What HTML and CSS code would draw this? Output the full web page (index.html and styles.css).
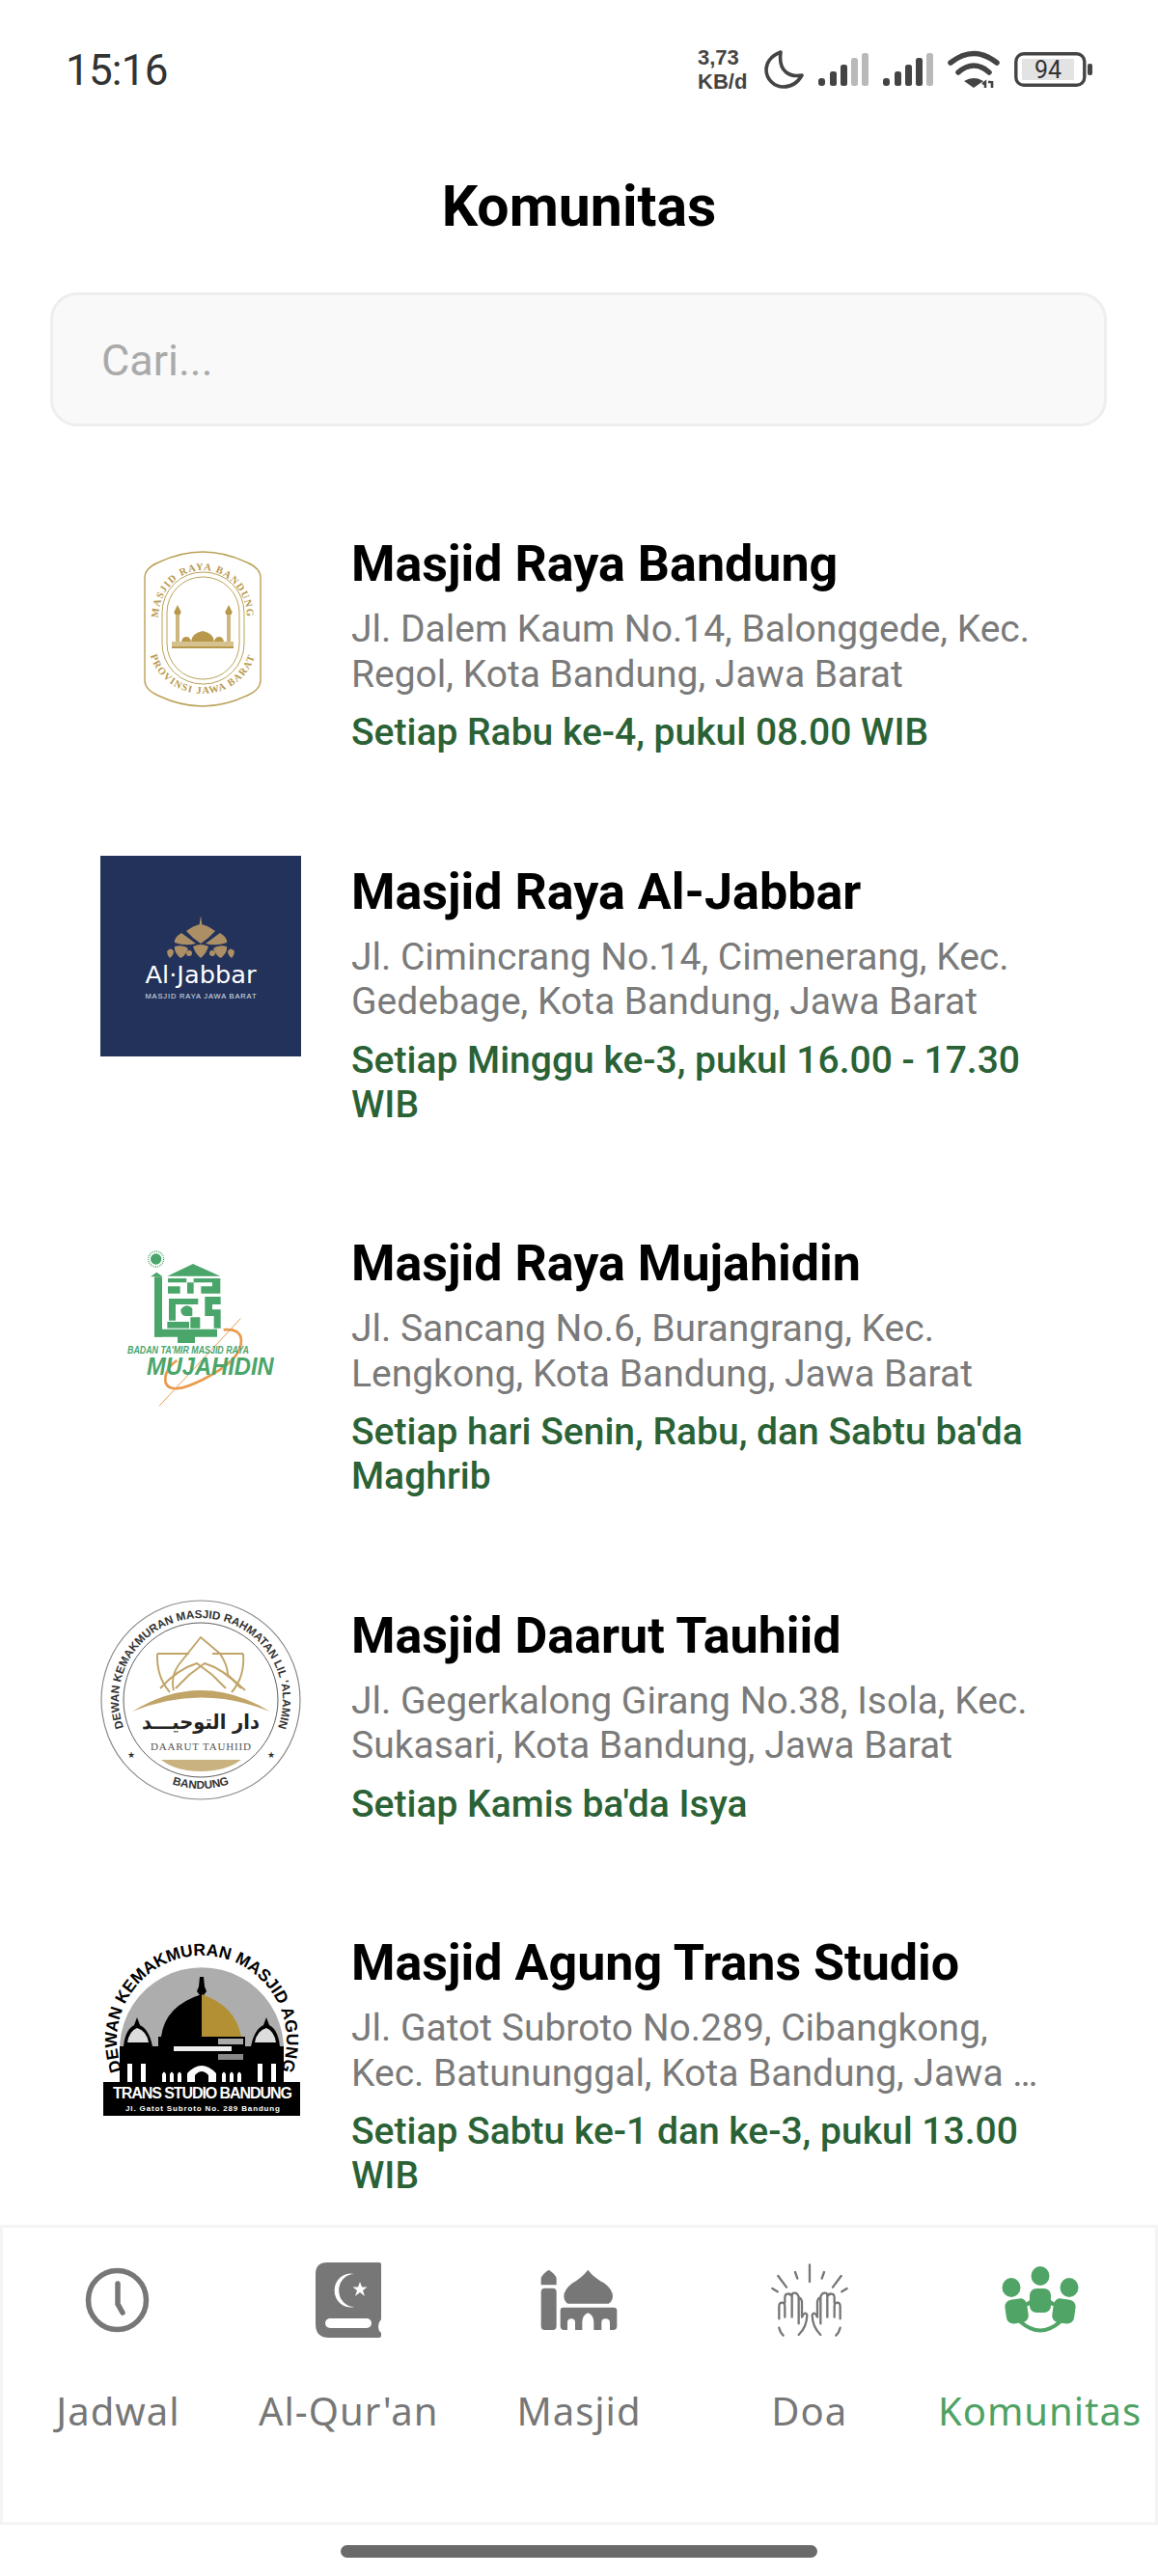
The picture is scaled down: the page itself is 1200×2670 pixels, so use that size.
FILE: index.html
```html
<!DOCTYPE html>
<html lang="id">
<head>
  <meta charset="UTF-8" />
  <meta name="viewport" content="width=device-width, initial-scale=1.0"/>
  <title>Komunitas</title>
  <link rel="stylesheet" href="styles.css">
</head>
<body>

  <div class="status-bar">
    <span class="time">15:16</span>
    <div class="status-icons">
      <div class="net-speed">3,73<br>KB/d</div>
      <svg width="41" height="40" viewBox="0 0 41 40"><path d="M17 2C6 6 2 14 2 20c0 10 8 18 18 18 8 0 15-5 19-12-11 2-25-2-22-24z" fill="none" stroke="#444" stroke-width="3.6" stroke-linejoin="round"/></svg>
      <svg width="52" height="34" viewBox="0 0 52 34">
        <rect x="0" y="26" width="7" height="8" rx="3" fill="#444"/><rect x="12" y="19" width="7" height="15" rx="2.5" fill="#444"/><rect x="23" y="12" width="7" height="22" rx="2.5" fill="#444"/><rect x="34" y="5" width="7" height="29" rx="2.5" fill="#b9b9b9"/><rect x="45" y="0" width="7" height="34" rx="2.5" fill="#b9b9b9"/>
      </svg>
      <svg width="52" height="34" viewBox="0 0 52 34">
        <rect x="0" y="26" width="7" height="8" rx="3" fill="#444"/><rect x="12" y="19" width="7" height="15" rx="2.5" fill="#444"/><rect x="23" y="12" width="7" height="22" rx="2.5" fill="#444"/><rect x="34" y="5" width="7" height="29" rx="2.5" fill="#444"/><rect x="45" y="0" width="7" height="34" rx="2.5" fill="#b9b9b9"/>
      </svg>
      <svg width="54" height="40" viewBox="0 0 54 40">
        <path d="M3 13Q27-6 51 13M11 23Q27 9 43 23" fill="none" stroke="#444" stroke-width="5.500" stroke-linecap="round"/>
        <path d="M17 32Q27 26 37 32L27 39z" fill="#444"/>
        <path d="M39 39v-6l-3 2M42 33l3 0M46 32v7" fill="none" stroke="#444" stroke-width="2.6"/>
      </svg>
      <svg width="81" height="36" viewBox="0 0 81 36">
        <rect x="1.8" y="1.8" width="71" height="32.4" rx="8" fill="none" stroke="#444" stroke-width="3.4"/>
        <rect x="8" y="7" width="54" height="22" fill="#e3e3e3"/>
        <rect x="76" y="12" width="5" height="12" rx="2" fill="#444"/>
        <text x="35" y="27" class="batt-text" text-anchor="middle">94</text>
      </svg>
    </div>
  </div>

  <h1 class="page-title">Komunitas</h1>

  <div class="search-box">Cari...</div>

  <main class="list">

    <div class="item">
      <svg class="logo" viewBox="0 0 208 208">
        <path d="M46 52Q46 42 60 36Q106 14 152 36Q166 42 166 52V158Q166 168 152 174Q106 196 60 174Q46 168 46 158z" fill="#fff" stroke="#bba157" stroke-width="1.4"/>
        <rect x="64" y="46" width="85" height="116" rx="42" fill="none" stroke="#bba157" stroke-width="1"/>
        <rect x="69" y="51" width="75" height="106" rx="37" fill="none" stroke="#bba157" stroke-width="1"/>
        <path id="l1top" d="M60 94A46 50 0 0 1 152 94" fill="none"/>
        <path id="l1bot" d="M50 119A56 53 0 0 0 162 119" fill="none"/>
        <text class="logo1-text"><textPath href="#l1top" startOffset="50%" text-anchor="middle">MASJID RAYA BANDUNG</textPath></text>
        <text class="logo1-text"><textPath href="#l1bot" startOffset="50%" text-anchor="middle">PROVINSI JAWA BARAT</textPath></text>
        <g fill="#b8994c">
          <path d="M76 88Q80 80 80 80Q80 80 84 88z"/><rect x="77" y="88" width="6" height="2"/><rect x="78" y="90" width="4" height="32" fill="#cdb77e"/>
          <path d="M129 88Q133 80 133 80Q133 80 137 88z"/><rect x="130" y="88" width="6" height="2"/><rect x="131" y="90" width="4" height="32" fill="#cdb77e"/>
          <path d="M94 118Q95 109 106 107Q117 109 118 118z"/>
          <path d="M84 118Q85 113 89 113Q93 113 94 118zM118 118Q119 113 123 113Q127 113 128 118z"/>
          <rect x="74" y="118" width="64" height="5" fill="#d5c28f"/>
          <rect x="74" y="123" width="64" height="2"/>
        </g>
      </svg>
      <div class="item-body">
        <h3>Masjid Raya Bandung</h3>
        <p class="address">Jl. Dalem Kaum No.14, Balonggede, Kec. Regol, Kota Bandung, Jawa Barat</p>
        <p class="schedule">Setiap Rabu ke-4, pukul 08.00 WIB</p>
      </div>
    </div>

    <div class="item">
      <svg class="logo" viewBox="0 0 208 208">
        <rect width="208" height="208" fill="#23325a"/>
        <g fill="#ad8f66">
          <path d="M104 62l1.500 10-1.500 3-1.500-3z"/>
          <path d="M89 78Q97 72 104 71Q111 72 119 78Q112 86 104 91Q96 86 89 78z"/>
          <path d="M84 80L99 91Q88 94 77 90Q76 85 84 80zM124 80L109 91Q120 94 131 90Q132 85 124 80z"/>
          <path d="M77 94Q86 92 91 96Q88 104 83 106Q76 100 77 94zM131 94Q122 92 117 96Q120 104 125 106Q132 100 131 94z"/>
          <path d="M96 94Q104 90 112 94Q110 101 104 106Q98 101 96 94z"/>
          <path d="M69 99Q73 94 76 99Q76 103 72 106Q69 103 69 99zM139 99Q135 94 132 99Q132 103 136 106Q139 103 139 99z"/>
          <circle cx="92" cy="101" r="3"/><circle cx="116" cy="101" r="3"/>
          <circle cx="104" cy="102" r="2.500"/>
        </g>
        <text x="104" y="132" class="jabbar-name" text-anchor="middle" textLength="115" lengthAdjust="spacingAndGlyphs">Al·Jabbar</text>
        <text x="104" y="148" class="jabbar-sub" text-anchor="middle" textLength="115">MASJID RAYA JAWA BARAT</text>
      </svg>
      <div class="item-body">
        <h3>Masjid Raya Al-Jabbar</h3>
        <p class="address">Jl. Cimincrang No.14, Cimenerang, Kec. Gedebage, Kota Bandung, Jawa Barat</p>
        <p class="schedule">Setiap Minggu ke-3, pukul 16.00 - 17.30 WIB</p>
      </div>
    </div>

    <div class="item">
      <svg class="logo" viewBox="0 0 208 208">
        <g transform="translate(6 -2) scale(.3333)">
          <g fill="#4aa56a">
            <circle cx="155" cy="105" r="17"/>
            <circle cx="155" cy="105" r="24" fill="none" stroke="#4aa56a" stroke-width="4" stroke-dasharray="3 3"/>
            <path d="M190 158L270 120L355 158z"/>
            <path d="M138 160L157 146L176 160z"/>
            <rect x="150" y="160" width="24" height="187"/>
            <path d="M150 323H345V347H150zM222 347H276V366H222z"/>
            <path d="M192 165H250V178H192zM272 165H355V190H330V178H272zM192 190H230V212H192zM252 178H272V212H252zM295 190H355V212H295z"/>
            <path d="M195 228H286V246H216V296H195zM307 222H356V246H330V262H356V320H335V282H307zM232 262Q250 240 268 258V282H246Q232 282 232 262zM262 286H292V320H262z"/>
            <path d="M190 300H258V320H190z"/>
          </g>
          <g fill="none" stroke="#ea9a4e">
            <path d="M165 562L418 290" stroke-width="3"/>
            <path d="M365 325Q420 320 420 360Q420 420 300 480Q200 530 185 490Q178 450 220 420" stroke-width="8"/>
          </g>
          <text x="66" y="398" class="muj-small" textLength="378" lengthAdjust="spacingAndGlyphs">BADAN TA'MIR MASJID RAYA</text>
          <text x="126" y="465" class="muj-big" textLength="395" lengthAdjust="spacingAndGlyphs">MUJAHIDIN</text>
        </g>
      </svg>
      <div class="item-body">
        <h3>Masjid Raya Mujahidin</h3>
        <p class="address">Jl. Sancang No.6, Burangrang, Kec. Lengkong, Kota Bandung, Jawa Barat</p>
        <p class="schedule">Setiap hari Senin, Rabu, dan Sabtu ba'da Maghrib</p>
      </div>
    </div>

    <div class="item">
      <svg class="logo" viewBox="0 0 208 208">
        <circle cx="104" cy="104" r="103" fill="#fff" stroke="#8a8a8a" stroke-width="1.2"/>
        <circle cx="104" cy="104" r="80" fill="none" stroke="#333" stroke-width=".8"/>
        <path id="l4top" d="M27.600 141.300A85 85 0 1 1 180.400 141.300" fill="none"/>
        <path id="l4bot" d="M58 183.700A92 92 0 0 0 150 183.700" fill="none"/>
        <text class="dt-ring"><textPath href="#l4top" startOffset="50%" text-anchor="middle">DEWAN KEMAKMURAN MASJID RAHMATAN LIL 'ALAMIN</textPath></text>
        <text class="dt-ring"><textPath href="#l4bot" startOffset="50%" text-anchor="middle">BANDUNG</textPath></text>
        <text x="32" y="164" class="dt-star">★</text>
        <text x="177" y="164" class="dt-star">★</text>
        <g fill="none" stroke="#c0a468" stroke-width="1.900">
          <path d="M76 94Q72 78 84 64L104 39L124 56Q132 68 132 78L150 94"/>
          <path d="M59 56H92M59 56Q58 80 72 96M148 56H116M148 56Q150 80 136 96"/>
          <path d="M62 92Q80 72 100 66L116 78L130 92M146 92Q128 72 108 66L92 78L78 92"/>
        </g>
        <path d="M33 116Q104 72 176 116Q104 87 33 116z" fill="#c0a468"/>
        <text x="104" y="134" class="dt-arab" text-anchor="middle" textLength="122" lengthAdjust="spacingAndGlyphs">دار التوحيـــد</text>
        <text x="104" y="156" class="dt-name" text-anchor="middle" textLength="104">DAARUT TAUHIID</text>
        <path d="M63 166H146Q130 178 104 178Q78 178 63 166z" fill="#c9b27f"/>
      </svg>
      <div class="item-body">
        <h3>Masjid Daarut Tauhiid</h3>
        <p class="address">Jl. Gegerkalong Girang No.38, Isola, Kec. Sukasari, Kota Bandung, Jawa Barat</p>
        <p class="schedule">Setiap Kamis ba'da Isya</p>
      </div>
    </div>

    <div class="item">
      <svg class="logo" viewBox="0 0 208 208">
        <path d="M27 161A85 85 0 1 1 183 161z" fill="#adadad"/>
        <path id="l5top" d="M25.200 155A88 88 0 1 1 184.800 155" fill="none"/>
        <text class="agung-ring"><textPath href="#l5top" startOffset="50%" text-anchor="middle">DEWAN KEMAKMURAN MASJID AGUNG</textPath></text>
        <path d="M103 52h4l1 10 2 5-3 4h-4l-3-4 2-5z" fill="#000"/>
        <path d="M105 70Q67 82 63 114H105z" fill="#000"/>
        <path d="M105 70Q140 82 146 114H105z" fill="#b39033"/>
        <path d="M60 114H150V162H60z" fill="#000"/>
        <rect x="76" y="124" width="60" height="5" fill="#eee"/>
        <rect x="122" y="116" width="26" height="6" fill="#aaa"/>
        <rect x="122" y="132" width="26" height="6" fill="#888"/>
        <path d="M90 162V152Q105 136 120 152V162z" fill="#fff"/>
        <path d="M98 162V154Q105 146 112 154V162z" fill="#000"/>
        <g id="dome-side">
          <path d="M38 94l3 8h-6z" fill="#000"/>
          <path d="M24 124Q26 104 38 101Q50 104 54 124z" fill="#000"/>
          <path d="M28 120Q30 108 38 105Q48 108 50 120z" fill="#ddd"/>
          <rect x="20" y="124" width="40" height="38" fill="#000"/>
          <rect x="28" y="142" width="5" height="20" fill="#fff"/>
          <rect x="42" y="142" width="5" height="20" fill="#fff"/>
        </g>
        <use href="#dome-side" transform="translate(210 0) scale(-1 1)"/>
        <g fill="#fff">
          <path d="M64 162v-9q2-5 4 0v9zM72 162v-9q2-5 4 0v9zM80 162v-9q2-5 4 0v9zM126 162v-9q2-5 4 0v9zM134 162v-9q2-5 4 0v9zM142 162v-9q2-5 4 0v9z"/>
        </g>
        <rect x="3" y="161" width="204" height="35" fill="#000"/>
        <text x="106" y="178" class="agung-name" text-anchor="middle" textLength="186">TRANS STUDIO BANDUNG</text>
        <text x="106" y="191" class="agung-addr" text-anchor="middle" textLength="160">Jl. Gatot Subroto No. 289 Bandung</text>
      </svg>
      <div class="item-body">
        <h3>Masjid Agung Trans Studio</h3>
        <p class="address">Jl. Gatot Subroto No.289, Cibangkong, Kec. Batununggal, Kota Bandung, Jawa …</p>
        <p class="schedule">Setiap Sabtu ke-1 dan ke-3, pukul 13.00 WIB</p>
      </div>
    </div>

  </main>

  <nav class="tabs">
    <a class="tab">
      <svg width="80" height="80" viewBox="0 0 80 80" fill="none" stroke="#777" stroke-linecap="round">
        <ellipse cx="39.500" cy="40" rx="30" ry="30.500" stroke-width="5.500"/>
        <path d="M40 23V44L45 53" stroke-width="5.500"/>
      </svg>
      <span>Jadwal</span>
    </a>
    <a class="tab">
      <svg width="80" height="80" viewBox="0 0 80 80">
        <path d="M18 1H72Q74 1 74 3V60Q71 63 71 67Q71 72 74 74V77Q74 79 72 79H20Q6 79 6 65V13Q6 1 18 1z" fill="#777"/>
        <rect x="16" y="59" width="48" height="10" rx="5" fill="#fff"/>
        <path d="M46 13A16.500 17.500 0 1 0 46 47A14 15 0 1 1 46 13z" fill="#fff"/>
        <path d="M52 21L54 26.500H59.500L55 30L57 36L52 32L47 36L49 30L44.500 26.500H50z" fill="#fff"/>
      </svg>
      <span>Al-Qur'an</span>
    </a>
    <a class="tab">
      <svg width="80" height="80" viewBox="0 0 80 80">
        <g transform="translate(-20 -4) scale(.3333)" fill="#777">
          <path d="M62 85V65Q64 52 86 38Q108 52 110 65V85z"/>
          <rect x="62" y="95" width="48" height="130" rx="12"/>
          <path d="M208 38Q225 62 260 80Q285 100 285 120Q285 135 272 143H145Q133 135 133 120Q133 100 158 80Q190 62 208 38z"/>
          <path d="M132 155H288Q298 155 298 165V213Q298 225 286 225H276V202Q276 190 262 190Q250 190 250 202V225H226V200Q226 180 208 172Q190 180 190 200V225H168V202Q168 190 156 190Q144 190 144 202V225H134Q122 225 122 213V165Q122 155 132 155z"/>
        </g>
      </svg>
      <span>Masjid</span>
    </a>
    <a class="tab">
      <svg width="80" height="80" viewBox="0 0 80 80">
        <g transform="translate(-20 -4) scale(.3333)" fill="none" stroke="#777" stroke-width="7" stroke-linecap="round" stroke-linejoin="round">
          <path d="M180 22V75M135 45L142 65M82 57L108 92M64 96L80 106M225 45L218 65M278 57L252 92M296 96L280 106"/>
          <g id="doa-hand">
            <path d="M85 190V152Q85 140 94 140Q103 140 103 152V185M103 140V125Q103 113 112 113M125 185V120Q125 108 134 110Q142 110 146 122V205M125 118Q118 110 112 113Q120 113 125 120M146 125Q154 125 156 138V185Q165 165 172 178Q172 215 146 240M85 218Q88 232 98 242"/>
          </g>
          <use href="#doa-hand" transform="translate(360 0) scale(-1 1)"/>
        </g>
      </svg>
      <span>Doa</span>
    </a>
    <a class="tab active">
      <svg width="80" height="80" viewBox="0 0 80 80" fill="#50a566">
        <ellipse cx="40" cy="15" rx="9.500" ry="10"/>
        <ellipse cx="10" cy="27" rx="9.500" ry="10"/>
        <ellipse cx="70" cy="27" rx="9.500" ry="10"/>
        <rect x="29" y="28" width="22" height="25" rx="7"/>
        <rect x="4" y="39" width="23" height="25" rx="7" transform="rotate(-8 15 51)"/>
        <rect x="53" y="39" width="23" height="25" rx="7" transform="rotate(8 65 51)"/>
        <path d="M20 63Q40 80 60 63M27 44L30 42M53 44L50 42" fill="none" stroke="#50a566" stroke-width="4" stroke-linecap="round"/>
      </svg>
      <span>Komunitas</span>
    </a>
  </nav>

  <div class="home-bar"><div class="home-indicator"></div></div>

</body>
</html>
```

FILE: styles.css
```css
* {
  box-sizing: border-box;
}

html, body {
  margin: 0;
  padding: 0;
  background: #fff;
  font-family: 'Roboto', sans-serif;
}

body {
  height: 100vh;
  display: flex;
  flex-direction: column;
  overflow: hidden;
}

.status-bar {
  flex: none;
  height: 144px;
  padding: 0 68px;
  display: flex;
  justify-content: space-between;
  align-items: center;
}

.time {
  margin-top: 2px;
  font-size: 44px;
  color: #333;
  letter-spacing: -0.8px;
}

.status-icons {
  display: flex;
  align-items: center;
  gap: 15px;
}

.net-speed {
  width: 54px;
  font-family: 'Liberation Sans', sans-serif;
  font-size: 22px;
  font-weight: 700;
  line-height: 25px;
  white-space: nowrap;
  color: #444;
}

.batt-text {
  font-family: 'Roboto', sans-serif;
  font-size: 25px;
  fill: #333;
}

.page-title {
  flex: none;
  margin: 35px 0 0;
  height: 70px;
  line-height: 70px;
  text-align: center;
  font-size: 59px;
  font-weight: 700;
  color: #000;
}

.search-box {
  flex: none;
  margin: 54px 53px 0 52px;
  height: 139px;
  padding: 2px 50px 0;
  display: flex;
  align-items: center;
  background: #f9f9f9;
  border: 3px solid #eee;
  border-radius: 28px;
  font-size: 45px;
  color: #aaa;
}

.list {
  flex: 1;
  min-height: 0;
  overflow: hidden;
  padding: 105px 104px 0;
  display: flex;
  flex-direction: column;
  gap: 104.500px;
}

.item {
  flex: none;
  display: flex;
  align-items: flex-start;
  gap: 52px;
}

.logo {
  flex: none;
  width: 208px;
  height: 208px;
}

.item-body {
  width: 732px;
  padding-top: 8px;
}

.item-body h3 {
  margin: 0;
  font-size: 52px;
  line-height: 60px;
  font-weight: 700;
  color: #000;
}

.address {
  margin: 14px 0 0;
  font-size: 39px;
  line-height: 46.500px;
  color: #7a7a7a;
}

.schedule {
  margin: 14px 0 0;
  font-size: 39px;
  line-height: 46px;
  font-weight: 500;
  color: #2a6236;
}

/* logo lettering */
.logo1-text {
  font-family: 'Liberation Serif', serif;
  font-size: 10.500px;
  font-weight: 700;
  letter-spacing: 1.200px;
  fill: #b8994c;
}

.jabbar-name {
  font-family: 'DejaVu Sans', sans-serif;
  font-size: 24px;
  fill: #fff;
}

.jabbar-sub {
  font-family: 'Liberation Sans', sans-serif;
  font-size: 7.500px;
  fill: #dfe3ec;
}

.muj-small {
  font-family: 'Liberation Sans', sans-serif;
  font-size: 30px;
  font-style: italic;
  font-weight: 700;
  fill: #4aa56a;
}

.muj-big {
  font-family: 'Liberation Sans', sans-serif;
  font-size: 78px;
  font-style: italic;
  font-weight: 700;
  fill: #4aa56a;
}

.dt-ring {
  font-family: 'Liberation Sans', sans-serif;
  font-size: 11.800px;
  font-weight: 700;
  fill: #333;
}

.dt-star {
  font-family: 'DejaVu Sans', sans-serif;
  font-size: 9px;
  fill: #333;
  text-anchor: middle;
}

.dt-arab {
  font-family: 'DejaVu Sans', sans-serif;
  font-size: 21px;
  font-weight: 700;
  fill: #222;
}

.dt-name {
  font-family: 'Liberation Serif', serif;
  font-size: 11px;
  fill: #555;
}

.agung-ring {
  font-family: 'Liberation Sans', sans-serif;
  font-size: 17.500px;
  font-weight: 700;
  fill: #000;
}

.agung-name {
  font-family: 'Liberation Sans', sans-serif;
  font-size: 16px;
  font-weight: 700;
  fill: #fff;
}

.agung-addr {
  font-family: 'Liberation Sans', sans-serif;
  font-size: 8px;
  font-weight: 700;
  fill: #fff;
}

.tabs {
  flex: none;
  height: 311px;
  padding-top: 35px;
  display: flex;
  background: #fff;
  border: 3px solid #f4f4f4;
}

.tab {
  flex: 1;
  display: flex;
  flex-direction: column;
  align-items: center;
  color: #777;
}

.tab span {
  margin-top: 47px;
  font-family: 'Noto Sans', sans-serif;
  font-size: 40px;
  line-height: 56px;
  letter-spacing: 1px;
  white-space: nowrap;
}

.tab.active {
  color: #4ea263;
}

.home-bar {
  flex: none;
  height: 53px;
  display: flex;
  justify-content: center;
  padding-top: 21px;
}

.home-indicator {
  width: 494px;
  height: 13px;
  background: #6a6a6a;
  border-radius: 7px;
}
```
